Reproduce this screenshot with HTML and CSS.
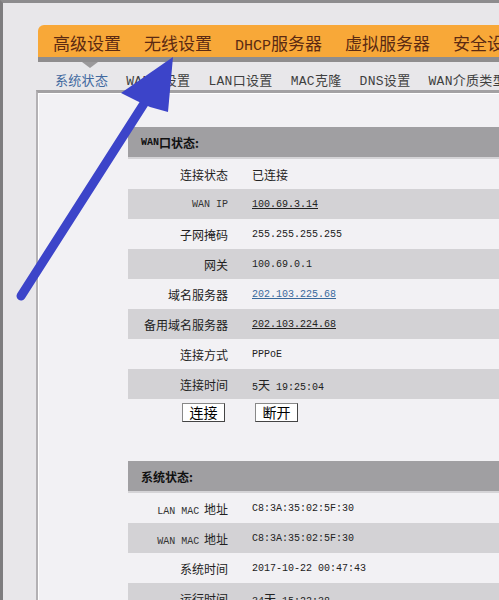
FILE: index.html
```html
<!DOCTYPE html>
<html lang="zh-CN">

<head>
  <meta charset="UTF-8">
  <title>运行状态</title>
  <link rel="stylesheet" href="styles.css">
</head>

<body>

  <div class="topnav">
    <span>高级设置</span>
    <span>无线设置</span>
    <span><span class="lat">DHCP</span>服务器</span>
    <span>虚拟服务器</span>
    <span>安全设置</span>
  </div>

  <div class="subnav">
    <span class="on">系统状态</span>
    <span>WAN口设置</span>
    <span>LAN口设置</span>
    <span>MAC克隆</span>
    <span>DNS设置</span>
    <span>WAN介质类型</span>
  </div>

  <div class="panel">
    <div class="sec-head"><span class="mono">WAN</span>口状态:</div>
    <div class="row"><span class="lbl">连接状态</span><span class="val cjk">已连接</span></div>
    <div class="row alt"><span class="lbl mono">WAN IP</span><a class="val link">100.69.3.14</a></div>
    <div class="row"><span class="lbl">子网掩码</span><span class="val">255.255.255.255</span></div>
    <div class="row alt"><span class="lbl">网关</span><span class="val">100.69.0.1</span></div>
    <div class="row"><span class="lbl">域名服务器</span><a class="val link blue">202.103.225.68</a></div>
    <div class="row alt"><span class="lbl">备用域名服务器</span><a class="val link">202.103.224.68</a></div>
    <div class="row"><span class="lbl">连接方式</span><span class="val">PPPoE</span></div>
    <div class="row alt"><span class="lbl">连接时间</span><span class="val">5<span class="cjk">天</span> 19:25:04</span></div>
    <div class="btns">
      <button type="button">连接</button>
      <button type="button">断开</button>
    </div>

    <div class="sec-head">系统状态:</div>
    <div class="row"><span class="lbl"><span class="mono">LAN MAC</span> 地址</span><span class="val">C8:3A:35:02:5F:30</span></div>
    <div class="row alt"><span class="lbl"><span class="mono">WAN MAC</span> 地址</span><span class="val">C8:3A:35:02:5F:30</span></div>
    <div class="row"><span class="lbl">系统时间</span><span class="val">2017-10-22 00:47:43</span></div>
    <div class="row alt"><span class="lbl">运行时间</span><span class="val">34<span class="cjk">天</span> 15:22:38</span></div>
  </div>

  <svg class="arrow" width="499" height="600" viewBox="0 0 499 600">
    <line x1="21" y1="296" x2="145" y2="102" stroke="#3c44c9" stroke-width="9" stroke-linecap="round" />
    <polygon points="173,57 121,93 137,101 150,107 168,112" fill="#3c44c9" />
  </svg>

</body>

</html>
```

FILE: styles.css
```css
* {
  box-sizing: border-box;
}

html,
body {
  margin: 0;
  height: 100%;
  overflow: hidden;
}

body {
  background: #e8e7ea;
  border-left: 3px solid #7e7d7f;
  border-top: 3px solid #8d8c8e;
  font-family: "Noto Sans CJK SC", sans-serif;
}

.mono,
.lat,
.val {
  font-family: "Liberation Mono", "Noto Sans CJK SC", monospace;
}

/* orange main menu */
.topnav {
  margin: 22px 0 0 35px;
  height: 37px;
  padding: 3px 0 0 15px;
  background: #f8a838;
  border-bottom: 5px solid #8f8d8e;
  border-radius: 6px 0 0 0;
  display: flex;
  align-items: center;
  gap: 23px;
  white-space: nowrap;
  font-size: 17px;
  color: #5b2a12;
}

.topnav .lat {
  font-size: 15px;
}

/* sub menu */
.subnav {
  position: relative;
  margin-left: 33px;
  height: 28px;
  padding: 6px 0 0 19px;
  display: flex;
  align-items: center;
  gap: 18px;
  white-space: nowrap;
  font-family: "Liberation Mono", "Noto Sans CJK SC", monospace;
  font-size: 13px;
  letter-spacing: 0.3px;
  color: #3f3f3f;
}

.subnav::before {
  content: "";
  position: absolute;
  left: 46px;
  top: 0;
  border-left: 8px solid transparent;
  border-right: 8px solid transparent;
  border-top: 6px solid #9b999b;
}

.subnav .on {
  color: #41699f;
}

/* content */
.panel {
  margin-left: 33px;
  height: 100%;
  padding: 34px 0 0 90px;
  background: #f2f1f4;
  border-top: 3px solid #a3a1a3;
  border-left: 2px solid #b3b1b4;
  box-shadow: inset 1px 1px 0 #fff;
}

.sec-head {
  height: 32px;
  padding-left: 13px;
  display: flex;
  align-items: center;
  background: #a09fa2;
  border-bottom: 2px solid #d5d4d7;
  font-size: 12px;
  font-weight: bold;
  color: #111;
}

.sec-head .mono {
  font-size: 10px;
}

.row {
  height: 30px;
  display: flex;
  align-items: center;
}

.row.alt {
  background: #d3d2d5;
}

.lbl {
  width: 100px;
  text-align: right;
  font-size: 12px;
  color: #222;
}

.lbl.mono,
.lbl .mono {
  font-size: 10px;
  color: #333;
}

.lbl .mono {
  margin-right: 2px;
}

.val {
  margin-left: 24px;
  font-size: 10px;
  color: #222;
}

.val.cjk,
.val .cjk {
  font-family: "Noto Sans CJK SC", sans-serif;
  font-size: 12px;
}

.link {
  text-decoration: underline;
}

.link.blue {
  color: #3a6a9c;
}

.btns {
  height: 62px;
  padding: 4px 0 0 54px;
  display: flex;
  align-items: flex-start;
  gap: 30px;
}

button {
  width: 43px;
  height: 19px;
  padding: 0;
  background: #fff;
  border: 1px solid #888;
  border-right-color: #444;
  border-bottom-color: #444;
  font-family: "Noto Sans CJK SC", sans-serif;
  font-size: 14px;
  line-height: 17px;
  color: #000;
}

.arrow {
  position: fixed;
  left: 0;
  top: 0;
  pointer-events: none;
}
```
